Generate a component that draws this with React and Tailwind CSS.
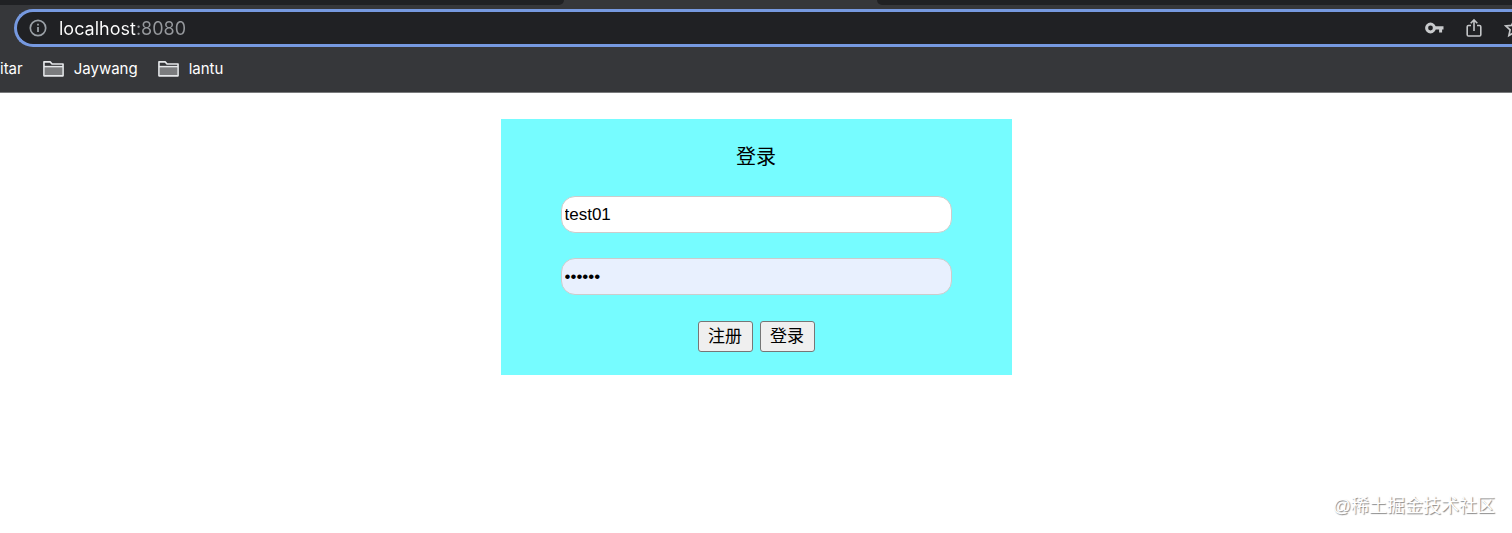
import { useState } from "react";

const InfoIcon = () => (
  <svg className="size-[18px] shrink-0" viewBox="0 0 18 18" fill="none" aria-hidden="true">
    <circle cx="9" cy="9" r="7.7" stroke="#9aa0a6" strokeWidth="1.7" />
    <path d="M9 8v5" stroke="#9aa0a6" strokeWidth="1.8" />
    <path d="M9 4.8v1.8" stroke="#9aa0a6" strokeWidth="1.8" />
  </svg>
);

const FolderIcon = () => (
  <svg className="h-[18px] w-[21px] shrink-0" viewBox="0 0 22 18" fill="none" aria-hidden="true">
    <path d="M2 7h18v9H2z" fill="#7b7c7e" />
    <path
      d="M1 16.2V1.500H7.500l2 2.200H21V16.200Z"
      stroke="#e6e8ea"
      strokeWidth="1.7"
      strokeLinejoin="round"
    />
    <path d="M1 6.500h20" stroke="#e6e8ea" strokeWidth="1.6" />
  </svg>
);

const KeyIcon = () => (
  <svg className="h-[12px] w-[19px]" viewBox="0 0 19 12" fill="none" aria-hidden="true">
    <circle cx="5.5" cy="6" r="3.9" stroke="#c8cacc" strokeWidth="3" />
    <path d="M9 4.2h9.500v3.300h-1.400v3h-3v-3H9z" fill="#c8cacc" />
  </svg>
);

const ShareIcon = () => (
  <svg className="h-[20px] w-[16px]" viewBox="0 0 16 20" fill="none" aria-hidden="true">
    <path
      d="M5 7.5H2.500Q1.200 7.500 1.200 8.800V16.700Q1.200 18 2.500 18h11q1.300 0 1.300-1.300V8.800q0-1.300-1.300-1.300H11"
      stroke="#c3c5c7"
      strokeWidth="1.6"
    />
    <path d="M8 13V2M4.700 5.200L8 1.900l3.300 3.300" stroke="#c3c5c7" strokeWidth="1.6" />
  </svg>
);

const StarIcon = () => (
  <svg className="size-5" viewBox="0 0 20 20" fill="none" aria-hidden="true">
    <path
      d="M10 2.2l2.400 5.200 5.700.6-4.200 3.900 1.200 5.600L10 14.600l-5.100 2.900 1.200-5.600L1.900 8l5.700-.6z"
      stroke="#c3c5c7"
      strokeWidth="1.7"
    />
  </svg>
);

const BrowserBar = () => {
  const [url, setUrl] = useState("localhost:8080");

  return (
    <header className="overflow-hidden border-b border-[#797a7c] bg-[#36373a] font-['Inter',sans-serif]">
      {/* Tab strip */}
      <div className="flex h-[5px] justify-between">
        <div className="w-[37.3%] rounded-br-lg bg-[#202124]" />
        <div className="w-[42%] rounded-bl-lg bg-[#202124]" />
      </div>

      {/* Address bar */}
      <div className="mt-1 ml-3.5 flex h-[38px] items-center rounded-l-full border-y-3 border-l-3 border-[#7699e0] bg-[#202124] pl-3">
        <InfoIcon />
        <input
          aria-label="Address"
          value={url}
          onChange={(e) => setUrl(e.target.value)}
          className="ml-3 min-w-0 flex-1 bg-[linear-gradient(to_right,#ffffff_77px,#96999d_77px)] bg-clip-text pt-0.5 text-lg text-transparent outline-none"
        />
        <div className="-mr-3 flex items-center gap-[22px]">
          <button aria-label="Saved passwords">
            <KeyIcon />
          </button>
          <button aria-label="Share">
            <ShareIcon />
          </button>
          <button aria-label="Bookmark this page">
            <StarIcon />
          </button>
        </div>
      </div>

      {/* Bookmarks */}
      <nav className="flex h-[45px] items-start gap-5 text-[15px] leading-[44px] text-white">
        <a href="#itar">itar</a>
        <a href="#jaywang" className="flex items-center gap-2.5">
          <FolderIcon />
          Jaywang
        </a>
        <a href="#lantu" className="flex items-center gap-2.5">
          <FolderIcon />
          lantu
        </a>
      </nav>
    </header>
  );
};

const LoginForm = () => {
  const [username, setUsername] = useState("test01");
  const [password, setPassword] = useState("123456");

  return (
    <form
      onSubmit={(e) => e.preventDefault()}
      className="mx-auto mt-[26px] flex w-full max-w-[511px] flex-col items-center bg-[#76fcff] pt-[23px] pb-[23px] text-black"
    >
      <h1 className="text-xl leading-[30px]">登录</h1>
      <input
        type="text"
        aria-label="用户名"
        value={username}
        onChange={(e) => setUsername(e.target.value)}
        className="mt-6 h-[37px] w-[391px] max-w-full rounded-[14px] border border-[#cccccc] bg-white px-[3px] text-[17px]"
      />
      <input
        type="password"
        aria-label="密码"
        value={password}
        onChange={(e) => setPassword(e.target.value)}
        className="mt-[25px] h-[37px] w-[391px] max-w-full rounded-[14px] border border-[#cccccc] bg-[#e8f0fe] px-[3px] text-[17px]"
      />
      <div className="mt-[26px] flex gap-[7px]">
        <button
          type="button"
          className="h-[31px] w-[55px] rounded-[3px] border border-[#767676] bg-[#efefef] text-[17px]"
        >
          注册
        </button>
        <button
          type="submit"
          className="h-[31px] w-[55px] rounded-[3px] border border-[#767676] bg-[#efefef] text-[17px]"
        >
          登录
        </button>
      </div>
    </form>
  );
};

export default function App() {
  return (
    <div className="flex min-h-screen flex-col bg-white font-['Liberation_Sans','Noto_Sans_CJK_SC',sans-serif]">
      <BrowserBar />
      <main>
        <LoginForm />
      </main>
      <footer className="mt-auto pr-[17px] pb-[15px] text-right text-lg leading-6 text-white text-shadow-[1px_1px_1px_#888888]">
        @稀土掘金技术社区
      </footer>
    </div>
  );
}
